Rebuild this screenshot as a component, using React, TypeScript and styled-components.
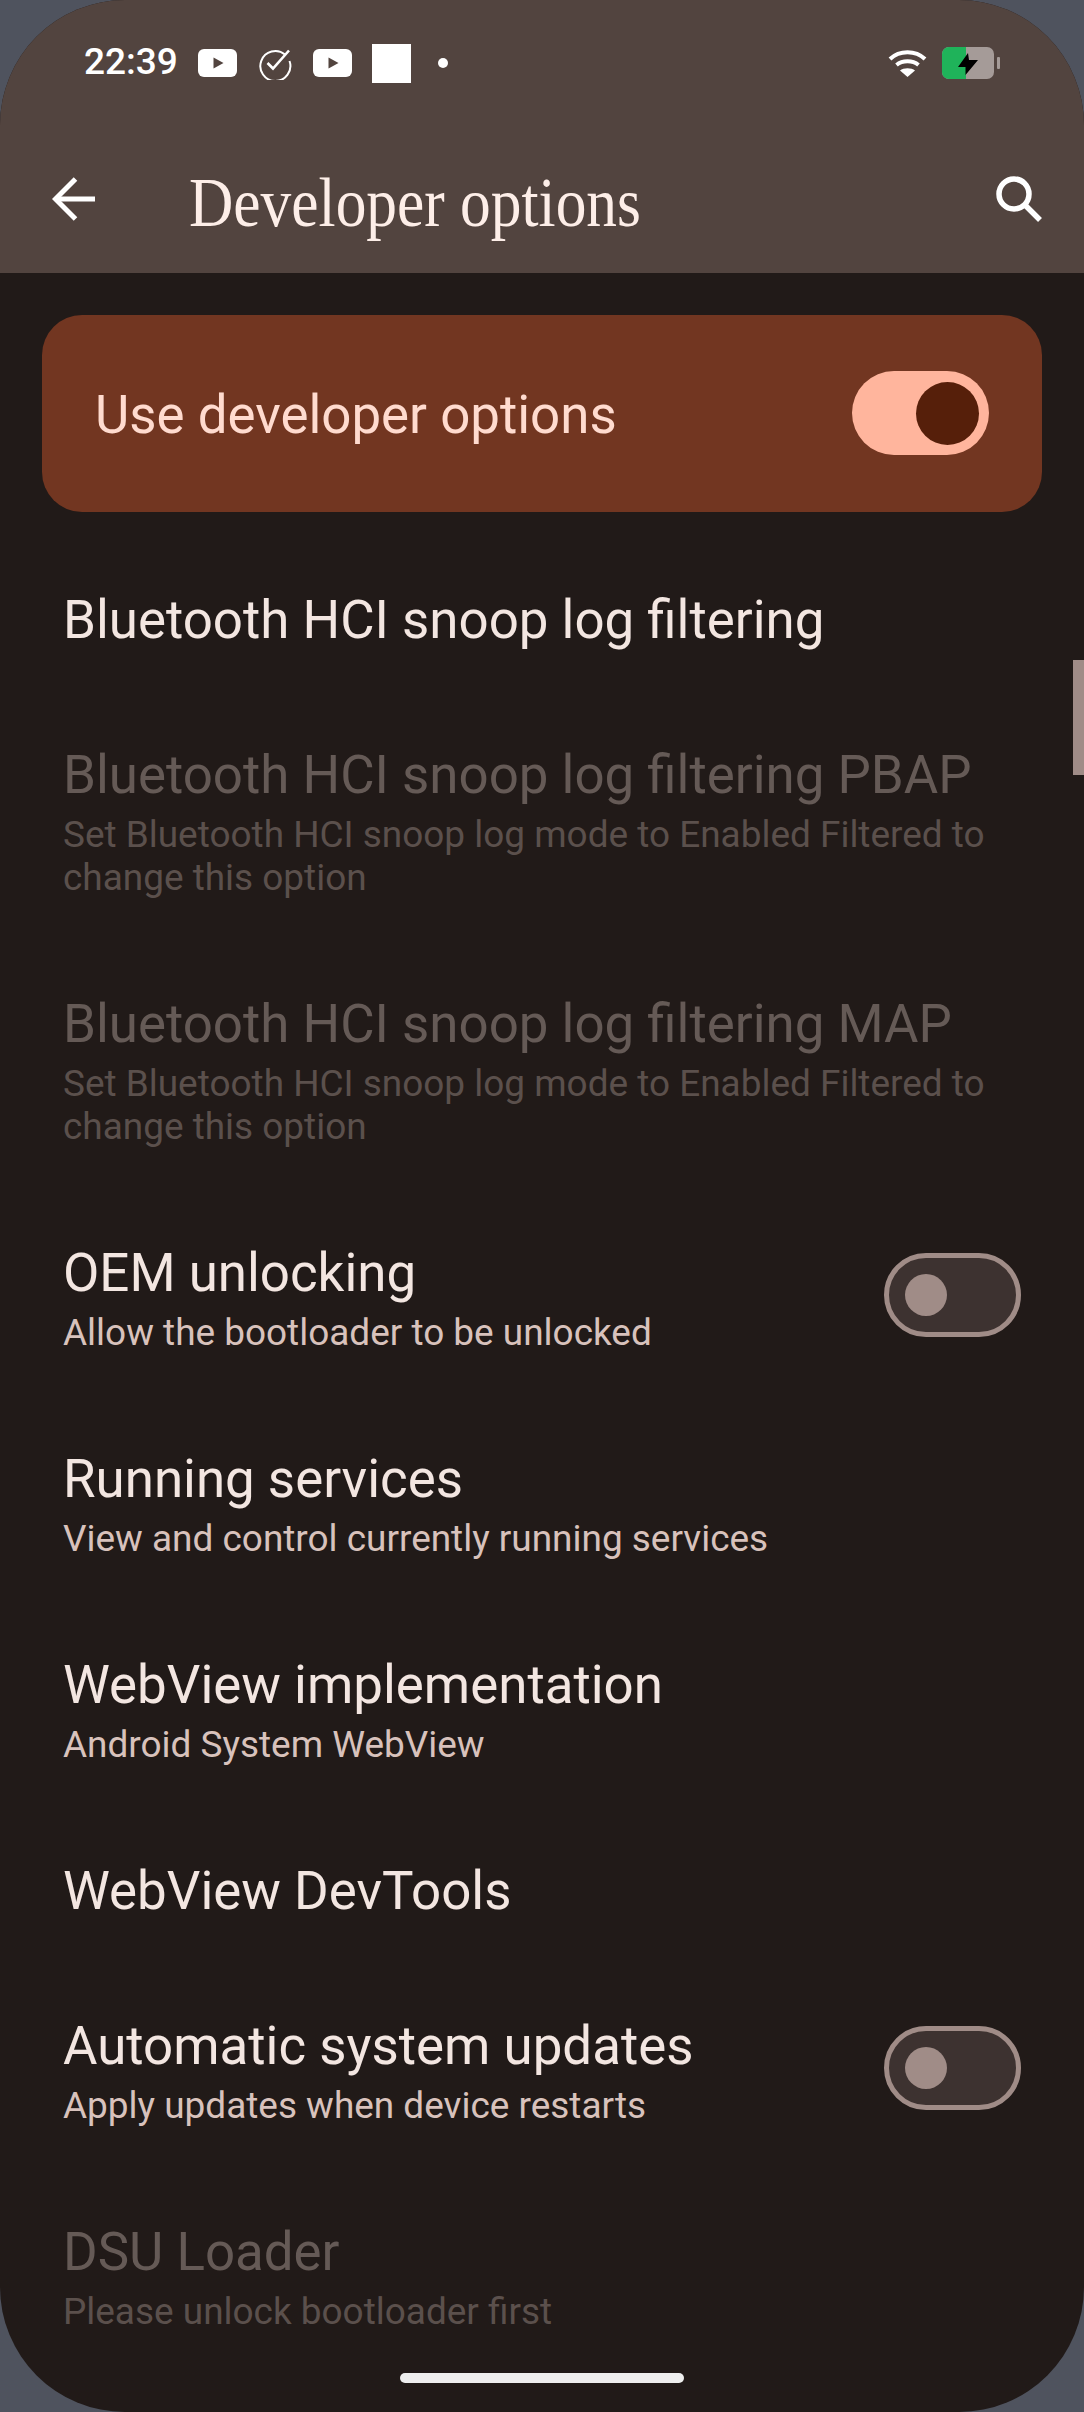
import React from "react";
import styled, { createGlobalStyle } from "styled-components";

const GlobalStyle = createGlobalStyle`
  html, body {
    margin: 0;
    padding: 0;
    background: #4f535e;
  }
  * {
    box-sizing: border-box;
  }
`;

const settings = [
  { title: "Bluetooth HCI snoop log filtering", single: true },
  {
    title: "Bluetooth HCI snoop log filtering PBAP",
    summary: "Set Bluetooth HCI snoop log mode to Enabled Filtered to change this option",
    disabled: true,
  },
  {
    title: "Bluetooth HCI snoop log filtering MAP",
    summary: "Set Bluetooth HCI snoop log mode to Enabled Filtered to change this option",
    disabled: true,
  },
  { title: "OEM unlocking", summary: "Allow the bootloader to be unlocked", toggle: true },
  { title: "Running services", summary: "View and control currently running services" },
  { title: "WebView implementation", summary: "Android System WebView" },
  { title: "WebView DevTools", single: true },
  { title: "Automatic system updates", summary: "Apply updates when device restarts", toggle: true },
  { title: "DSU Loader", summary: "Please unlock bootloader first", disabled: true },
];

function YoutubeIcon() {
  return (
    <svg width="39" height="28" viewBox="0 0 39 28">
      <rect width="39" height="28" rx="6" fill="#fff" />
      <path d="M15.5 8.5 L25.5 14 L15.5 19.5 Z" fill="#52443f" />
    </svg>
  );
}

function TaskIcon() {
  return (
    <svg width="34" height="34" viewBox="0 0 34 34" fill="none" stroke="#fff" strokeWidth="2">
      <path d="M27 8.5 A15 15 0 1 0 31.5 15" />
      <path d="M9.5 17 L15 22.5 L31 4.5" strokeWidth="2.6" />
    </svg>
  );
}

function WifiIcon() {
  return (
    <svg width="39" height="28" viewBox="0 0 38 28" fill="none" stroke="#fff" strokeWidth="4">
      <path d="M1.5 10 C11 1 27 1 36.5 10" />
      <path d="M8 16 C14 11 24 11 30 16" />
      <path d="M19 28 L11.5 21.5 C15 18.5 23 18.5 26.5 21.5 Z" fill="#fff" stroke="none" />
    </svg>
  );
}

function BatteryIcon() {
  return (
    <svg width="58" height="32" viewBox="0 0 58 32">
      <rect x="55" y="10" width="3" height="12" rx="1" fill="#a59b98" />
      <rect width="52" height="32" rx="7" fill="#a59b98" />
      <path d="M7 0 H24 V32 H7 A7 7 0 0 1 0 25 V7 A7 7 0 0 1 7 0 Z" fill="#1fb35a" />
      <path d="M26 6 L16 20 H23.5 L23.5 28 L36 13 H27 Z" fill="#000" />
    </svg>
  );
}

function BackIcon() {
  return (
    <svg width="43" height="44" viewBox="0 0 43 44" fill="none" stroke="#fff" strokeWidth="5">
      <path d="M43 22 H4" />
      <path d="M23.5 2 L3.5 22 L23.5 42" />
    </svg>
  );
}

function SearchIcon() {
  return (
    <svg width="46" height="46" viewBox="0 0 46 46" fill="none" stroke="#fff" strokeWidth="5.5">
      <circle cx="18" cy="18" r="15" />
      <path d="M28.5 28.5 L44 44" />
    </svg>
  );
}

export default function App() {
  return (
    <Screen>
      <GlobalStyle />
      <TopBar>
        <StatusBar>
          <StatusLeft>
            <Clock>22:39</Clock>
            <YoutubeIcon />
            <TaskIcon />
            <YoutubeIcon />
            <WhiteSquare />
            <StatusDot />
          </StatusLeft>
          <StatusRight>
            <WifiIcon />
            <BatteryIcon />
          </StatusRight>
        </StatusBar>
        <AppBar>
          <BackIcon />
          <PageTitle>Developer options</PageTitle>
          <SearchIcon />
        </AppBar>
      </TopBar>
      <Content>
        <MainSwitchCard>
          <MainSwitchLabel>Use developer options</MainSwitchLabel>
          <MainSwitch>
            <MainSwitchThumb />
          </MainSwitch>
        </MainSwitchCard>
        {settings.map((item) => (
          <SettingRow key={item.title} $single={item.single}>
            <SettingText>
              <SettingTitle $disabled={item.disabled}>{item.title}</SettingTitle>
              {item.summary && <SettingSummary $disabled={item.disabled}>{item.summary}</SettingSummary>}
            </SettingText>
            {item.toggle && (
              <OffSwitch>
                <OffSwitchThumb />
              </OffSwitch>
            )}
          </SettingRow>
        ))}
      </Content>
      <ScrollThumb />
      <HomeIndicator />
    </Screen>
  );
}

const Screen = styled.div`
  position: relative;
  width: 1084px;
  height: 2412px;
  overflow: hidden;
  border-radius: 125px;
  background: #211a18;
  font-family: Roboto, "Liberation Sans", sans-serif;
`;

const TopBar = styled.header`
  height: 273px;
  background: #52443f;
  display: flex;
  flex-direction: column;
`;

const StatusBar = styled.div`
  flex: none;
  height: 126px;
  padding: 0 84px 0 84px;
  display: flex;
  align-items: center;
  justify-content: space-between;
`;

const StatusLeft = styled.div`
  display: flex;
  align-items: center;
  gap: 21px;
`;

const StatusRight = styled.div`
  display: flex;
  align-items: center;
  gap: 15px;
`;

const Clock = styled.span`
  width: 93px;
  padding-bottom: 3px;
  font-size: 37px;
  font-weight: 500;
  color: #fff;
`;

const WhiteSquare = styled.div`
  width: 39px;
  height: 39px;
  margin-left: -1px;
  background: #fff;
`;

const StatusDot = styled.div`
  width: 10px;
  height: 10px;
  margin-left: 6px;
  border-radius: 50%;
  background: #fff;
`;

const AppBar = styled.div`
  flex: 1;
  display: flex;
  align-items: center;
  padding: 0 42px 2px 52px;
`;

const PageTitle = styled.h1`
  flex: 1;
  margin: 0 0 0 94px;
  padding-top: 9px;
  font-family: "Liberation Serif", serif;
  font-size: 69px;
  font-weight: 400;
  color: #fdeee8;
  transform: scaleX(0.89);
  transform-origin: left center;
`;

const Content = styled.main`
  display: flex;
  flex-direction: column;
  padding-top: 42px;
`;

const MainSwitchCard = styled.div`
  height: 197px;
  margin: 0 42px 27px;
  padding: 0 53px;
  border-radius: 40px;
  background: #723621;
  display: flex;
  align-items: center;
  justify-content: space-between;
`;

const MainSwitchLabel = styled.span`
  padding-top: 3px;
  font-size: 52.85px;
  color: #ffdbcf;
`;

const MainSwitch = styled.div`
  width: 137px;
  height: 84px;
  margin-top: -1px;
  padding-right: 10px;
  border-radius: 42px;
  background: #ffb59d;
  display: flex;
  align-items: center;
  justify-content: flex-end;
`;

const MainSwitchThumb = styled.div`
  width: 63px;
  height: 63px;
  border-radius: 50%;
  background: #561f0a;
`;

const SettingRow = styled.div<{ $single?: boolean }>`
  padding: 45px 63px ${(p) => (p.$single ? "42px" : "46px")};
  display: flex;
  align-items: center;
  justify-content: space-between;
  gap: 40px;
`;

const SettingText = styled.div`
  flex: 1;
  padding-top: 2px;
  margin-bottom: -2px;
`;

const SettingTitle = styled.div<{ $disabled?: boolean }>`
  font-size: 52.85px;
  line-height: 68px;
  color: ${(p) => (p.$disabled ? "#655a56" : "#f3e6e1")};
`;

const SettingSummary = styled.div<{ $disabled?: boolean }>`
  margin-top: 4px;
  font-size: 36.95px;
  line-height: 43px;
  color: ${(p) => (p.$disabled ? "#5b504c" : "#d8c2bc")};
`;

const OffSwitch = styled.div`
  flex: none;
  width: 137px;
  height: 84px;
  margin-top: 1px;
  padding-left: 16px;
  border: 5px solid #a08c87;
  border-radius: 42px;
  background: #3d3230;
  display: flex;
  align-items: center;
`;

const OffSwitchThumb = styled.div`
  width: 42px;
  height: 42px;
  border-radius: 50%;
  background: #a08c87;
`;

const ScrollThumb = styled.div`
  position: absolute;
  top: 660px;
  right: 0;
  width: 11px;
  height: 115px;
  background: #a08c87;
`;

const HomeIndicator = styled.div`
  position: absolute;
  left: 400px;
  top: 2373px;
  width: 284px;
  height: 10px;
  border-radius: 5px;
  background: #eeeeee;
`;
